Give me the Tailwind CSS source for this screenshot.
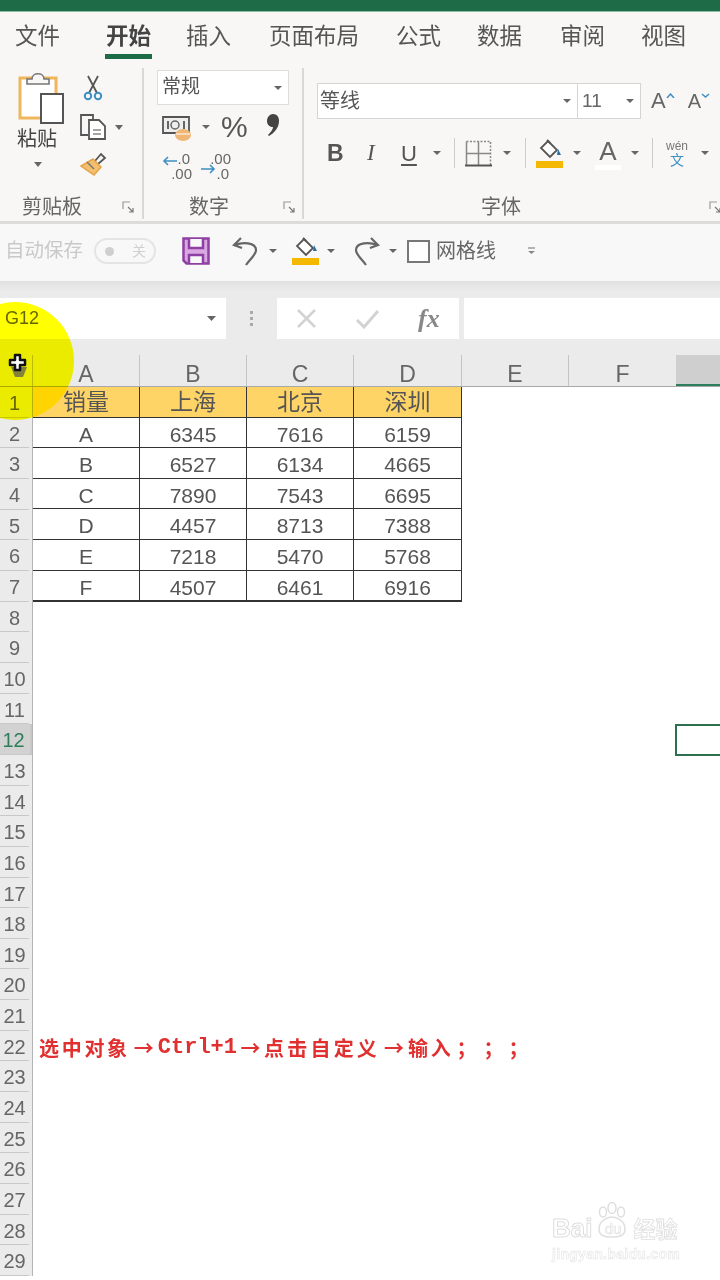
<!DOCTYPE html>
<html lang="zh-CN">
<head>
    <meta charset="UTF-8">
    <meta name="viewport" content="width=device-width, initial-scale=1.0">
    <title>Excel</title>
    <script src="https://cdn.jsdelivr.net/npm/@tailwindcss/browser@4"></script>
</head>
<body class="bg-white">
<div class="relative w-[720px] h-[1280px] overflow-hidden bg-white text-[#444] blur-[0.5px] font-['Liberation_Sans','Noto_Sans_CJK_SC',sans-serif]">

    <!-- title bar -->
    <div class="h-[12px] bg-[#1e6b47] border-b border-[#8dbba5]"></div>

    <!-- tabs -->
    <div class="h-[50px] bg-[#f8f7f6] flex items-start pt-[9px] pl-[15px] text-[22.5px] leading-[32px] text-[#555] whitespace-nowrap">
        <span>文件</span>
        <div class="ml-[45px] flex flex-col items-center">
            <span class="font-bold text-[#444]">开始</span>
            <div class="w-[47px] h-[5px] bg-[#1e6b47] mt-[1px]"></div>
        </div>
        <span class="ml-[34px]">插入</span>
        <span class="ml-[38px]">页面布局</span>
        <span class="ml-[37px]">公式</span>
        <span class="ml-[36px]">数据</span>
        <span class="ml-[38px]">审阅</span>
        <span class="ml-[36px]">视图</span>
    </div>

    <!-- ribbon -->
    <div class="h-[162px] bg-[#f8f7f6] border-b-[3px] border-[#dcdcdc] flex">
        <!-- clipboard group -->
        <div class="w-[144px] h-[151px] mt-[6px] border-r-2 border-[#d8d8d8] flex flex-col">
            <div class="h-[124px] flex">
                <div class="w-[76px] pl-[17px] flex flex-col pt-[2px]">
                    <svg width="50" height="54" viewBox="0 0 50 54" fill="none">
                        <path d="M3 8h36v40H3z" fill="#fff" stroke="#f0b65c" stroke-width="3"/>
                        <path d="M10 14V9h5c0-7 12-7 12 0h5v5z" fill="#f8f7f6" stroke="#777" stroke-width="1.6"/>
                        <path d="M24 24h22v29H24z" fill="#fff" stroke="#555" stroke-width="2"/>
                    </svg>
                    <span class="text-[20px] leading-[24px] mt-[3px] text-[#444]">粘贴</span>
                    <svg class="ml-[17px] mt-[11px]" width="8" height="5"><path d="M0 0h8l-4 5z" fill="#666"/></svg>
                </div>
                <div class="flex flex-col pt-[7px] pl-[3px]">
                    <svg class="ml-[4px]" width="20" height="26" viewBox="0 0 20 26" fill="none">
                        <path d="M5 1l9 17M15 1L6 18" stroke="#555" stroke-width="1.8"/>
                        <circle cx="5" cy="21" r="3.2" stroke="#3d8fc4" stroke-width="2"/>
                        <circle cx="15" cy="21" r="3.2" stroke="#3d8fc4" stroke-width="2"/>
                    </svg>
                    <div class="flex items-center mt-[12px]">
                        <svg width="29" height="28" viewBox="0 0 29 28" fill="none">
                            <path d="M9 22H2V2h12v5" stroke="#555" stroke-width="1.8"/>
                            <path d="M10 7h10l6 6v13H10z" fill="#fff" stroke="#555" stroke-width="1.8"/>
                            <path d="M14 17h8M14 21h8" stroke="#888" stroke-width="1.4"/>
                        </svg>
                        <svg class="ml-[7px]" width="8" height="5"><path d="M0 0h8l-4 5z" fill="#666"/></svg>
                    </div>
                    <svg class="mt-[11px]" width="28" height="25" viewBox="0 0 28 25" fill="none">
                        <path d="M16 9l6-7 4 4-7 6" stroke="#555" stroke-width="1.8"/>
                        <path d="M14 7l8 8-7 8L2 14z" fill="#f3bf6d" stroke="#e5a34a" stroke-width="1.5"/>
                        <path d="M8 10l7 7" stroke="#777" stroke-width="1.5"/>
                    </svg>
                </div>
            </div>
            <div class="flex items-center pl-[22px] pr-[7px] pt-[4px] justify-between text-[20px] leading-[24px] text-[#666]">
                <span>剪贴板</span>
                <svg width="13" height="13" viewBox="0 0 13 13" fill="none"><path d="M1 8V1h7" stroke="#999" stroke-width="1.2"/><path d="M6 6l5 5M11 7v4H7" stroke="#777" stroke-width="1.2"/></svg>
            </div>
        </div>

        <!-- number group -->
        <div class="w-[160px] h-[151px] mt-[6px] border-r-2 border-[#d8d8d8] flex flex-col pl-[13px]">
            <div class="h-[124px]">
                <div class="w-[132px] h-[35px] mt-[2px] bg-white border border-[#ddd] flex items-center justify-between pl-[4px] pr-[6px] text-[19px] text-[#555]">
                    <span>常规</span>
                    <svg width="8" height="4"><path d="M0 0h8l-4 4z" fill="#666"/></svg>
                </div>
                <div class="flex items-center h-[42px] mt-[1px] pl-[5px]">
                    <svg width="30" height="28" viewBox="0 0 30 28" fill="none">
                        <path d="M1 4h26v16H1z" fill="#eee" stroke="#555" stroke-width="1.8"/>
                        <path d="M6 8v8M22 8v8" stroke="#666" stroke-width="2"/>
                        <circle cx="13" cy="12" r="4" stroke="#666" stroke-width="1.5"/>
                        <ellipse cx="21" cy="22" rx="8" ry="6" fill="#f0b674"/>
                        <path d="M14 21h14" stroke="#fff"/>
                    </svg>
                    <svg class="ml-[10px]" width="8" height="4"><path d="M0 0h8l-4 4z" fill="#666"/></svg>
                    <span class="ml-[11px] text-[30px] leading-[40px] text-[#555]">%</span>
                    <svg class="ml-[18px] -mt-[4px]" width="14" height="24" viewBox="0 0 14 24"><path d="M7 1c4 0 6 3 6 7 0 7-5 12-10 15l-1-1c3-3 5-6 5-8-3 0-6-2-6-6s3-7 6-7z" fill="#444"/></svg>
                </div>
                <div class="flex pl-[5px] mt-[1px] text-[15px] leading-[15px] text-[#666]">
                    <div class="relative w-[30px] h-[32px] flex flex-col items-end pt-[2px]">
                        <span class="mr-[2px]">.0</span>
                        <span>.00</span>
                        <svg class="absolute left-0 top-[7px]" width="15" height="10" viewBox="0 0 15 10" fill="none"><path d="M15 5H2M6 1L2 5l4 4" stroke="#3d8fc4" stroke-width="1.6"/></svg>
                    </div>
                    <div class="relative w-[30px] ml-[9px] h-[32px] flex flex-col items-end pt-[2px]">
                        <span>.00</span>
                        <span class="mr-[2px]">.0</span>
                        <svg class="absolute left-0 top-[15px]" width="15" height="10" viewBox="0 0 15 10" fill="none"><path d="M0 5h13M9 1l4 4-4 4" stroke="#3d8fc4" stroke-width="1.6"/></svg>
                    </div>
                </div>
            </div>
            <div class="flex items-center justify-between pl-[32px] pr-[6px] pt-[4px] text-[20px] leading-[24px] text-[#666]">
                <span>数字</span>
                <svg width="13" height="13" viewBox="0 0 13 13" fill="none"><path d="M1 8V1h7" stroke="#999" stroke-width="1.2"/><path d="M6 6l5 5M11 7v4H7" stroke="#777" stroke-width="1.2"/></svg>
            </div>
        </div>

        <!-- font group -->
        <div class="flex-1 h-[151px] mt-[6px] flex flex-col pl-[13px]">
            <div class="h-[124px]">
                <div class="flex items-center mt-[15px]">
                    <div class="w-[261px] h-[36px] bg-white border border-[#d4d4d4] flex items-center justify-between pl-[2px] pr-[6px] text-[20px] text-[#555]">
                        <span>等线</span>
                        <svg width="8" height="4"><path d="M0 0h8l-4 4z" fill="#666"/></svg>
                    </div>
                    <div class="w-[63px] h-[36px] bg-white border border-l-0 border-[#d4d4d4] flex items-center justify-between pl-[4px] pr-[6px] text-[19px] text-[#666]">
                        <span>11</span>
                        <svg width="8" height="4"><path d="M0 0h8l-4 4z" fill="#666"/></svg>
                    </div>
                    <span class="ml-[10px] text-[22px] text-[#666] leading-[24px]">A</span>
                    <svg class="mb-[12px]" width="9" height="5" fill="none"><path d="M1 5l3.5-4L8 5" stroke="#3d8fc4" stroke-width="1.5"/></svg>
                    <span class="ml-[13px] text-[20px] text-[#666] leading-[24px]">A</span>
                    <svg class="mb-[12px]" width="9" height="5" fill="none"><path d="M1 1l3.5 3L8 1" stroke="#3d8fc4" stroke-width="1.5"/></svg>
                </div>
                <div class="flex items-center h-[40px] mt-[14px] pl-[10px] text-[#555]">
                    <span class="w-[14px] text-[23px] font-bold">B</span>
                    <span class="ml-[26px] w-[10px] text-[23px] italic font-['Liberation_Serif',serif]">I</span>
                    <span class="ml-[24px] w-[15px] text-[22px] underline underline-offset-[3px]">U</span>
                    <svg class="ml-[17px]" width="8" height="4"><path d="M0 0h8l-4 4z" fill="#666"/></svg>
                    <div class="ml-[13px] w-px h-[30px] bg-[#ccc]"></div>
                    <svg class="ml-[10px]" width="27" height="27" viewBox="0 0 27 27" fill="none">
                        <path d="M1.500 1.500h24v24" stroke="#888" stroke-width="1.5" stroke-dasharray="2 1.500"/>
                        <path d="M1.500 1.500v24M13.500 1.500v24M1.500 13.500h24" stroke="#888" stroke-width="1.500"/>
                        <path d="M0 25.500h27" stroke="#555" stroke-width="2"/>
                    </svg>
                    <svg class="ml-[11px]" width="8" height="4"><path d="M0 0h8l-4 4z" fill="#666"/></svg>
                    <div class="ml-[14px] w-px h-[30px] bg-[#ccc]"></div>
                    <svg class="ml-[10px]" width="28" height="30" viewBox="0 0 28 30" fill="none">
                        <path d="M12 3l9 9-7 7-9-9z" fill="#fff" stroke="#555" stroke-width="1.800"/>
                        <path d="M14 5l-3-3" stroke="#555" stroke-width="1.800"/>
                        <path d="M22 11l3 6h-4z" fill="#2f6f9f"/>
                        <path d="M0 23h27v7H0z" fill="#f5b800"/>
                    </svg>
                    <svg class="ml-[9px]" width="8" height="4"><path d="M0 0h8l-4 4z" fill="#666"/></svg>
                    <div class="ml-[14px] flex flex-col items-center w-[26px]">
                        <span class="text-[26px] leading-[28px] text-[#666]">A</span>
                        <div class="w-[26px] h-[5px] bg-white"></div>
                    </div>
                    <svg class="ml-[10px]" width="8" height="4"><path d="M0 0h8l-4 4z" fill="#666"/></svg>
                    <div class="ml-[13px] w-px h-[30px] bg-[#ccc]"></div>
                    <div class="ml-[11px] flex flex-col items-center w-[26px]">
                        <span class="text-[12px] leading-[13px] text-[#777]">wén</span>
                        <span class="text-[14px] leading-[14px] text-[#3d8fc4]">文</span>
                    </div>
                    <svg class="ml-[11px]" width="8" height="4"><path d="M0 0h8l-4 4z" fill="#666"/></svg>
                </div>
            </div>
            <div class="flex items-center justify-between pl-[164px] pt-[4px] text-[20px] leading-[24px] text-[#666]">
                <span>字体</span>
                <svg class="-mr-[2px]" width="13" height="13" viewBox="0 0 13 13" fill="none"><path d="M1 8V1h7" stroke="#999" stroke-width="1.2"/><path d="M6 6l5 5M11 7v4H7" stroke="#777" stroke-width="1.2"/></svg>
            </div>
        </div>
    </div>

    <!-- quick access toolbar -->
    <div class="h-[57px] bg-[#f9f8f8] flex items-center pl-[5px] pb-[3px] whitespace-nowrap">
        <span class="text-[19.5px] text-[#c9c9c9]">自动保存</span>
        <div class="ml-[11px] w-[62px] h-[26px] rounded-full border-2 border-[#e4e4e4] flex items-center justify-between pl-[9px] pr-[8px] text-[14px] text-[#d0d0d0]">
            <div class="w-[9px] h-[9px] rounded-full bg-[#cfcfcf]"></div>
            <span>关</span>
        </div>
        <svg class="ml-[26px]" width="28" height="28" viewBox="0 0 28 28" fill="none">
            <path d="M1.500 1.500h25v25h-22l-3-3z" fill="#d9a8e2" stroke="#8e3fa3" stroke-width="2.500"/>
            <path d="M7 2v9h14V2" fill="#f8f7f8" stroke="#8e3fa3" stroke-width="2.500"/>
            <path d="M7 26v-8h14v8" fill="#f8f7f8" stroke="#8e3fa3" stroke-width="2.500"/>
        </svg>
        <svg class="ml-[22px]" width="28" height="30" viewBox="0 0 28 30" fill="none">
            <path d="M9 2L2 9l8 3M3 9c7-3 21-3 21 5 0 5-6 9-10 15" stroke="#666" stroke-width="2.200"/>
        </svg>
        <svg class="ml-[9px]" width="8" height="4"><path d="M0 0h8l-4 4z" fill="#666"/></svg>
        <svg class="ml-[15px]" width="28" height="30" viewBox="0 0 28 30" fill="none">
            <path d="M12 3l9 9-7 7-9-9z" fill="#fff" stroke="#555" stroke-width="1.800"/>
            <path d="M14 5l-3-3" stroke="#555" stroke-width="1.800"/>
            <path d="M22 9l3 6h-4z" fill="#2f6f9f"/>
            <path d="M0 22h27v7H0z" fill="#f5b800"/>
        </svg>
        <svg class="ml-[7px]" width="8" height="4"><path d="M0 0h8l-4 4z" fill="#666"/></svg>
        <svg class="ml-[17px]" width="28" height="30" viewBox="0 0 28 30" fill="none">
            <path d="M19 2l7 7-8 3M25 9C18 6 4 6 4 14c0 5 6 9 10 15" stroke="#666" stroke-width="2.200"/>
        </svg>
        <svg class="ml-[9px]" width="8" height="4"><path d="M0 0h8l-4 4z" fill="#666"/></svg>
        <div class="ml-[10px] w-[23px] h-[23px] bg-white border-2 border-[#777]"></div>
        <span class="ml-[6px] text-[20px] text-[#666]">网格线</span>
        <svg class="ml-[31px]" width="9" height="8" fill="none"><path d="M1 1h7" stroke="#888" stroke-width="1.200"/><path d="M1 4l3.500 3L8 4z" fill="#888"/></svg>
    </div>

    <!-- formula bar -->
    <div class="h-[74px] bg-[#ebebeb] pt-[17px] flex items-start bg-gradient-to-b from-[#e0e0e0] to-[#ebebeb] to-[12%]">
        <div class="w-[226px] h-[41px] bg-white flex items-center justify-between pl-[5px] pr-[10px] text-[18px] text-[#666]">
            <span>G12</span>
            <svg width="9" height="5"><path d="M0 0h9l-4.500 5z" fill="#666"/></svg>
        </div>
        <div class="w-[51px] h-[41px] flex flex-col items-center justify-center gap-[3px]">
            <div class="w-[3px] h-[3px] bg-[#aaa]"></div>
            <div class="w-[3px] h-[3px] bg-[#aaa]"></div>
            <div class="w-[3px] h-[3px] bg-[#aaa]"></div>
        </div>
        <div class="w-[182px] h-[41px] bg-white flex items-center pl-[19px]">
            <svg width="21" height="21" viewBox="0 0 21 21" fill="none"><path d="M2 2l17 17M19 2L2 19" stroke="#d2d2d2" stroke-width="2.500"/></svg>
            <svg class="ml-[38px]" width="25" height="20" viewBox="0 0 25 20" fill="none"><path d="M2 11l7 7L23 2" stroke="#d2d2d2" stroke-width="3"/></svg>
            <span class="ml-[38px] text-[26px] italic font-bold font-['Liberation_Serif',serif] text-[#888]">fx</span>
        </div>
        <div class="flex-1 ml-[5px] h-[41px] bg-white"></div>
    </div>

    <!-- sheet -->
    <div class="flex flex-col">
        <!-- column headers -->
        <div class="h-[32px] flex bg-[#ebebeb] border-b border-[#a8a8a8] text-[23px] leading-[38px] text-[#666] text-center">
            <div class="w-[33px] border-r border-[#bbb]"></div>
            <div class="w-[107px] border-r border-[#c4c4c4]">A</div>
            <div class="w-[107px] border-r border-[#c4c4c4]">B</div>
            <div class="w-[107px] border-r border-[#c4c4c4]">C</div>
            <div class="w-[108px] border-r border-[#c4c4c4]">D</div>
            <div class="w-[107px] border-r border-[#c4c4c4]">E</div>
            <div class="w-[107px]">F</div>
            <div class="flex-1 bg-[#cfcfcf] border-b-2 border-[#2e7d5b]"></div>
        </div>

        <div class="flex">
            <!-- row headers -->
            <div class="w-[33px] bg-[#ebebeb] border-r border-[#b4b4b4] pr-[3px] text-[20px] leading-[32px] text-[#666] text-center [&>div]:h-[30.66px] [&>div]:border-b [&>div]:border-[#c8c8c8]">
                <div>1</div><div>2</div><div>3</div><div>4</div><div>5</div><div>6</div><div>7</div><div>8</div><div>9</div><div>10</div>
                <div>11</div><div class="bg-[#d2d2d2] text-[#2e7d5b] border-r-2 border-r-[#2e7d5b] -mr-[3px] pr-[3px]">12</div><div>13</div><div>14</div><div>15</div><div>16</div><div>17</div><div>18</div><div>19</div><div>20</div>
                <div>21</div><div>22</div><div>23</div><div>24</div><div>25</div><div>26</div><div>27</div><div>28</div><div>29</div>
            </div>

            <div class="relative flex-1">
                <!-- data table -->
                <div class="w-[429px] grid grid-cols-[107px_107px_107px_108px] auto-rows-[30.6px] border-b border-r border-[#333] text-[21px] leading-[33px] text-center text-[#555] [&>div]:border-b [&>div]:border-r [&>div]:border-[#333]">
                    <div class="bg-[#ffd467] text-[23px] leading-[31px]">销量</div><div class="bg-[#ffd467] text-[23px] leading-[31px]">上海</div><div class="bg-[#ffd467] text-[23px] leading-[31px]">北京</div><div class="bg-[#ffd467] text-[23px] leading-[31px]">深圳</div>
                    <div>A</div><div>6345</div><div>7616</div><div>6159</div>
                    <div>B</div><div>6527</div><div>6134</div><div>4665</div>
                    <div>C</div><div>7890</div><div>7543</div><div>6695</div>
                    <div>D</div><div>4457</div><div>8713</div><div>7388</div>
                    <div>E</div><div>7218</div><div>5470</div><div>5768</div>
                    <div>F</div><div>4507</div><div>6461</div><div>6916</div>
                </div>

                <!-- note in row 22 -->
                <div class="mt-[433px] pl-[6px] flex items-center text-[20px] leading-[26px] font-bold text-[#e03030] tracking-[2.700px] whitespace-nowrap font-['Noto_Sans_CJK_SC',sans-serif]">
                    <span>选中对象</span><span class="w-[28px] text-center tracking-normal">→</span><span class="font-['Liberation_Mono',monospace] text-[22px] tracking-[0px]">Ctrl+1</span><span class="w-[27px] text-center tracking-normal">→</span><span class="tracking-[3.200px]">点击自定义</span><span class="w-[28px] text-center tracking-normal">→</span><span>输入</span><span class="ml-[3px] w-[27px] text-left">；</span><span class="w-[25px] text-left">；</span><span class="w-[25px] text-left">；</span>
                </div>

                <!-- selected cell G12 -->
                <div class="absolute left-[642px] top-[337px] w-[60px] h-[32px] border-2 border-[#2e6f50] bg-white"></div>
            </div>
        </div>
    </div>

    <!-- cursor highlight -->
    <div class="absolute left-[-44px] top-[302px] w-[118px] h-[118px] rounded-full bg-[#ffff00] mix-blend-multiply"></div>
    <svg class="absolute left-[7px] top-[353px]" width="24" height="26" viewBox="0 0 24 26" fill="none">
        <path d="M4 14h16l-4 10H8z" fill="#555" opacity="0.7"/>
        <path d="M8 2h5v5h5v5h-5v5H8v-5H3V7h5z" fill="#fff" stroke="#111" stroke-width="2.500" stroke-linejoin="round"/>
    </svg>

    <!-- watermark -->
    <div class="absolute left-[552px] top-[1213px] w-[130px] text-[#e4e4e4] leading-none">
        <div class="flex items-end">
            <span class="text-[26px] font-bold [-webkit-text-stroke:1px_#dedede] text-white">Bai</span>
            <span class="relative w-[41px] h-[28px] text-[15px] text-center leading-[32px] text-white [-webkit-text-stroke:0.600px_#dedede]">du
                <svg class="absolute left-[4px] -top-[12px]" width="32" height="42" viewBox="0 0 32 42" fill="none" stroke="#dedede" stroke-width="1.500"><ellipse cx="16" cy="7" rx="4" ry="5.500"/><ellipse cx="7" cy="11" rx="3.500" ry="5"/><ellipse cx="25" cy="11" rx="3.500" ry="5"/><path d="M3 28c0-8 8-12 13-12s13 4 13 12c0 8-8 8-13 8s-13 0-13-8z"/></svg>
            </span>
            <span class="text-[22px] font-bold text-white [-webkit-text-stroke:0.800px_#dedede]">经验</span>
        </div>
        <div class="text-[14px] mt-[6px] font-bold text-white tracking-[0.300px] [-webkit-text-stroke:0.500px_#dedede]">jingyan.baidu.com</div>
    </div>
</div>
</body>
</html>
